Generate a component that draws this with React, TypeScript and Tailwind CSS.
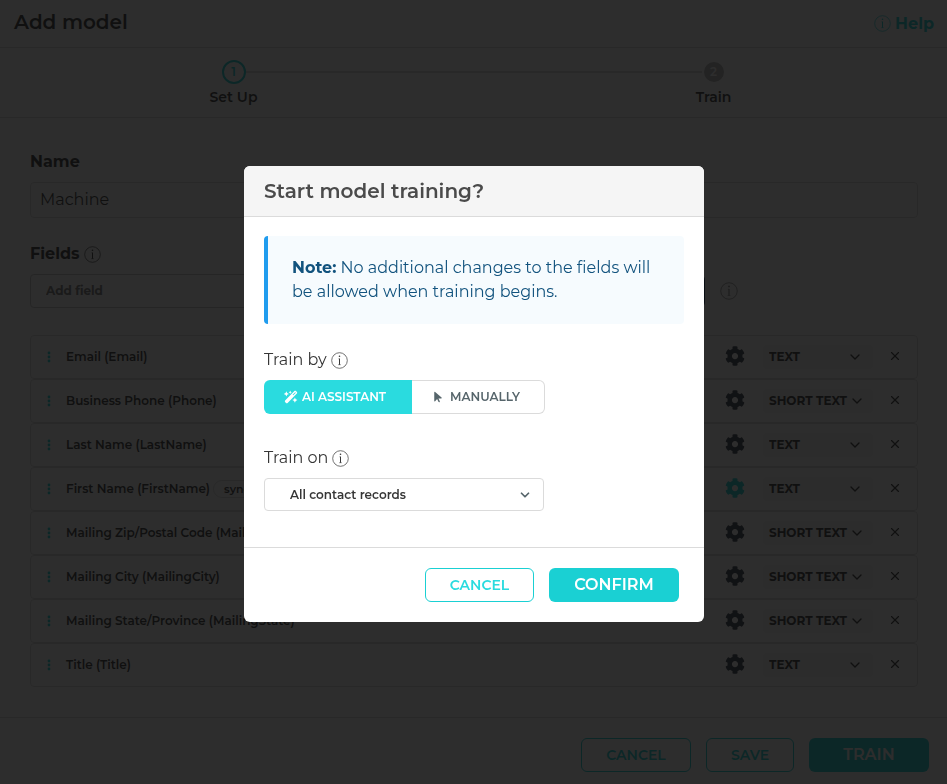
import React, { useState } from 'react'
import { FaCog } from 'react-icons/fa'
import { FaArrowPointer, FaWandMagicSparkles } from 'react-icons/fa6'
import { ChevronDown, X } from 'lucide-react'
import { clsx } from 'clsx'

type Field = {
  label: string
  type: 'TEXT' | 'SHORT TEXT'
  synced?: boolean
}

const fields: Field[] = [
  { label: 'Email (Email)', type: 'TEXT' },
  { label: 'Business Phone (Phone)', type: 'SHORT TEXT' },
  { label: 'Last Name (LastName)', type: 'TEXT' },
  { label: 'First Name (FirstName)', type: 'TEXT', synced: true },
  { label: 'Mailing Zip/Postal Code (MailingPostalCode)', type: 'SHORT TEXT' },
  { label: 'Mailing City (MailingCity)', type: 'SHORT TEXT' },
  { label: 'Mailing State/Province (MailingState)', type: 'SHORT TEXT' },
  { label: 'Title (Title)', type: 'TEXT' },
]

function InfoIcon({ className }: { className?: string }) {
  return (
    <svg viewBox="0 0 17 17" className={clsx('shrink-0', className)} fill="none" stroke="currentColor" aria-hidden="true">
      <circle cx="8.5" cy="8.5" r="7.8" strokeWidth="0.7" />
      <path d="M8.5 6.6v6.2" strokeWidth="1" />
      <path d="M7.4 6.8h1.1M7.1 12.7h2.8" strokeWidth="0.5" />
      <circle cx="8.5" cy="4.2" r="0.8" fill="currentColor" stroke="none" />
    </svg>
  )
}

function DragDots() {
  return (
    <svg viewBox="0 0 4 12" className="h-3 w-1 shrink-0 fill-[#1ad0d3]" aria-hidden="true">
      <circle cx="2" cy="2" r="1.4" />
      <circle cx="2" cy="6" r="1.4" />
      <circle cx="2" cy="10" r="1.4" />
    </svg>
  )
}

function Stepper() {
  return (
    <div className="border-b border-[#dbdbdb] pt-3 pb-[11px]">
      <div className="mx-auto w-[530px]">
        <div className="flex h-6 items-center pr-[15px] pl-[13px]">
          <span className="flex size-6 items-center justify-center rounded-full border-2 border-[#1ad0d3] text-xs font-semibold text-[#1ad0d3]">1</span>
          <span className="mr-0.5 h-0.5 flex-1 bg-[#dbdbdb]" />
          <span className="flex size-5 items-center justify-center rounded-full bg-[#b5b5b5] text-xs font-semibold text-white">2</span>
        </div>
        <div className="mt-1 flex justify-between text-sm leading-[18px] font-semibold">
          <span className="w-[50px] text-center whitespace-nowrap">Set Up</span>
          <span className="w-[50px] text-center">Train</span>
        </div>
      </div>
    </div>
  )
}

function FieldRow({ field }: { field: Field }) {
  return (
    <li className="flex h-11 items-center rounded border border-[#dbdbdb] pr-[15px] pl-4 text-xs font-semibold">
      <DragDots />
      <span className="ml-[15px] whitespace-nowrap">{field.label}</span>
      {field.synced && (
        <span className="ml-[3px] rounded-full border border-[#dbdbdb] px-2.5 text-[11px] leading-4">synced</span>
      )}
      <button type="button" aria-label={`${field.label} settings`} className="ml-auto pb-0.5">
        <FaCog className={clsx('size-5', field.synced ? 'text-[#1ad0d3]' : 'text-[#363f4d]')} />
      </button>
      <div className="relative ml-[18px] w-[110px]">
        <select
          aria-label={`${field.label} type`}
          defaultValue={field.type}
          className="block h-6 w-full appearance-none rounded bg-[#f5f5f5] pl-1.5 text-xs font-bold"
        >
          <option>TEXT</option>
          <option>SHORT TEXT</option>
        </select>
        <ChevronDown className={clsx('pointer-events-none absolute top-1 size-4', field.type === 'TEXT' ? 'right-2.5' : 'right-2')} />
      </div>
      <button type="button" aria-label={`Remove ${field.label}`} className="ml-[15px] pb-0.5">
        <X className="size-[14px]" />
      </button>
    </li>
  )
}

function TrainingModal() {
  const [mode, setMode] = useState<'ai' | 'manual'>('ai')

  return (
    <div className="fixed inset-0 flex items-center justify-center bg-[#0a0a0a]/86 pt-1 pl-px">
      <div role="dialog" aria-modal="true" aria-labelledby="modal-title" className="w-[460px] overflow-hidden rounded-md bg-white">
        <header className="border-b border-[#dbdbdb] bg-[#f5f5f5] px-5 py-[10px]">
          <h2 id="modal-title" className="text-xl leading-[30px] font-semibold text-[#4a4a4a]">Start model training?</h2>
        </header>

        <section className="px-5 pt-[19px] pb-9">
          <p className="rounded border-l-4 border-[#209cee] bg-[#f6fbfe] px-6 py-5 text-base leading-6 text-[#12537e]">
            <strong className="font-bold">Note:</strong> No additional changes to the fields will be allowed when training begins.
          </p>

          <div className="mt-6 flex items-center gap-1 text-base leading-6">
            Train by <InfoIcon className="size-[17px]" />
          </div>
          <div className="mt-2 flex text-xs font-semibold">
            <button
              type="button"
              aria-pressed={mode === 'ai'}
              onClick={() => setMode('ai')}
              className="flex h-[34px] w-[148px] items-center justify-center gap-1 rounded-l-md bg-[#2adbdf] pr-1.5 text-white"
            >
              <FaWandMagicSparkles className="size-[14px]" /> AI ASSISTANT
            </button>
            <button
              type="button"
              aria-pressed={mode === 'manual'}
              onClick={() => setMode('manual')}
              className="flex h-[34px] w-[133px] items-center justify-center gap-1.5 rounded-r-md border border-l-0 border-[#dbdbdb] pr-1 text-[#56656b]"
            >
              <FaArrowPointer className="size-3" /> MANUALLY
            </button>
          </div>

          <label htmlFor="train-on" className="mt-8 flex items-center gap-1 text-base leading-6">
            Train on <InfoIcon className="size-[17px]" />
          </label>
          <div className="relative mt-2 w-[280px]">
            <select id="train-on" className="block h-[33px] w-full appearance-none rounded border border-[#dbdbdb] bg-white pl-[25px] text-xs font-semibold">
              <option>All contact records</option>
            </select>
            <ChevronDown className="pointer-events-none absolute top-[10px] right-3 size-[14px] text-[#56656b]" strokeWidth={3} />
          </div>
        </section>

        <footer className="flex justify-end gap-[15px] border-t border-[#dbdbdb] px-[25px] py-5">
          <button type="button" className="h-[34px] w-[109px] rounded-md border border-[#1ad0d3] text-sm font-semibold text-[#2adbdf]">CANCEL</button>
          <button type="button" className="h-[34px] w-[130px] rounded-md bg-[#1ad0d3] text-base font-semibold text-white">CONFIRM</button>
        </footer>
      </div>
    </div>
  )
}

export default function App() {
  return (
    <div className="min-h-screen bg-white font-[Montserrat,Inter,sans-serif] text-[#363636]">
      <header className="flex h-12 items-center justify-between border-b border-[#dbdbdb] pr-[13px] pb-1 pl-[14px]">
        <h1 className="text-xl font-semibold">Add model</h1>
        <a href="#help" className="flex items-center gap-1 pt-1 text-base font-bold text-[#1ad0d3]">
          <InfoIcon className="size-[17px]" /> Help
        </a>
      </header>

      <Stepper />

      <main className="pt-8 pr-[29px] pb-[30px] pl-[30px]">
        <label htmlFor="model-name" className="block text-base leading-6 font-bold">Name</label>
        <input
          id="model-name"
          defaultValue="Machine"
          className="mt-2 block h-9 w-full rounded border border-[#dbdbdb] px-[9px] pb-0.5 text-base"
        />

        <label htmlFor="add-field" className="mt-6 flex items-center gap-1 text-base leading-6 font-bold">
          Fields <InfoIcon className="size-[17px]" />
        </label>
        <div className="mt-2 flex items-center">
          <select id="add-field" className="h-[34px] w-[560px] appearance-none rounded border border-[#c8c8c8] pl-[15px] text-xs font-bold text-[#7a7a7a]">
            <option>Add field</option>
          </select>
          <button type="button" className="ml-4 h-[34px] w-[99px] rounded-md bg-[#00234b] text-sm font-semibold text-white">ADD</button>
          <InfoIcon className="ml-[15px] size-[18px] text-[#7a7a7a]" />
        </div>

        <ul className="mt-[27px]">
          {fields.map((field) => (
            <FieldRow key={field.label} field={field} />
          ))}
        </ul>
      </main>

      <footer className="flex justify-end gap-[15px] border-t border-[#dbdbdb] pt-5 pr-[18px] pb-3">
        <button type="button" className="h-[34px] w-[110px] rounded-md border border-[#1ad0d3] text-sm font-semibold text-[#1ad0d3]">CANCEL</button>
        <button type="button" className="h-[34px] w-[88px] rounded-md border border-[#1ad0d3] text-sm font-semibold text-[#1ad0d3]">SAVE</button>
        <button type="button" className="h-[34px] w-[120px] rounded-md bg-[#1ad0d3] text-base font-semibold text-white">TRAIN</button>
      </footer>

      <TrainingModal />
    </div>
  )
}
